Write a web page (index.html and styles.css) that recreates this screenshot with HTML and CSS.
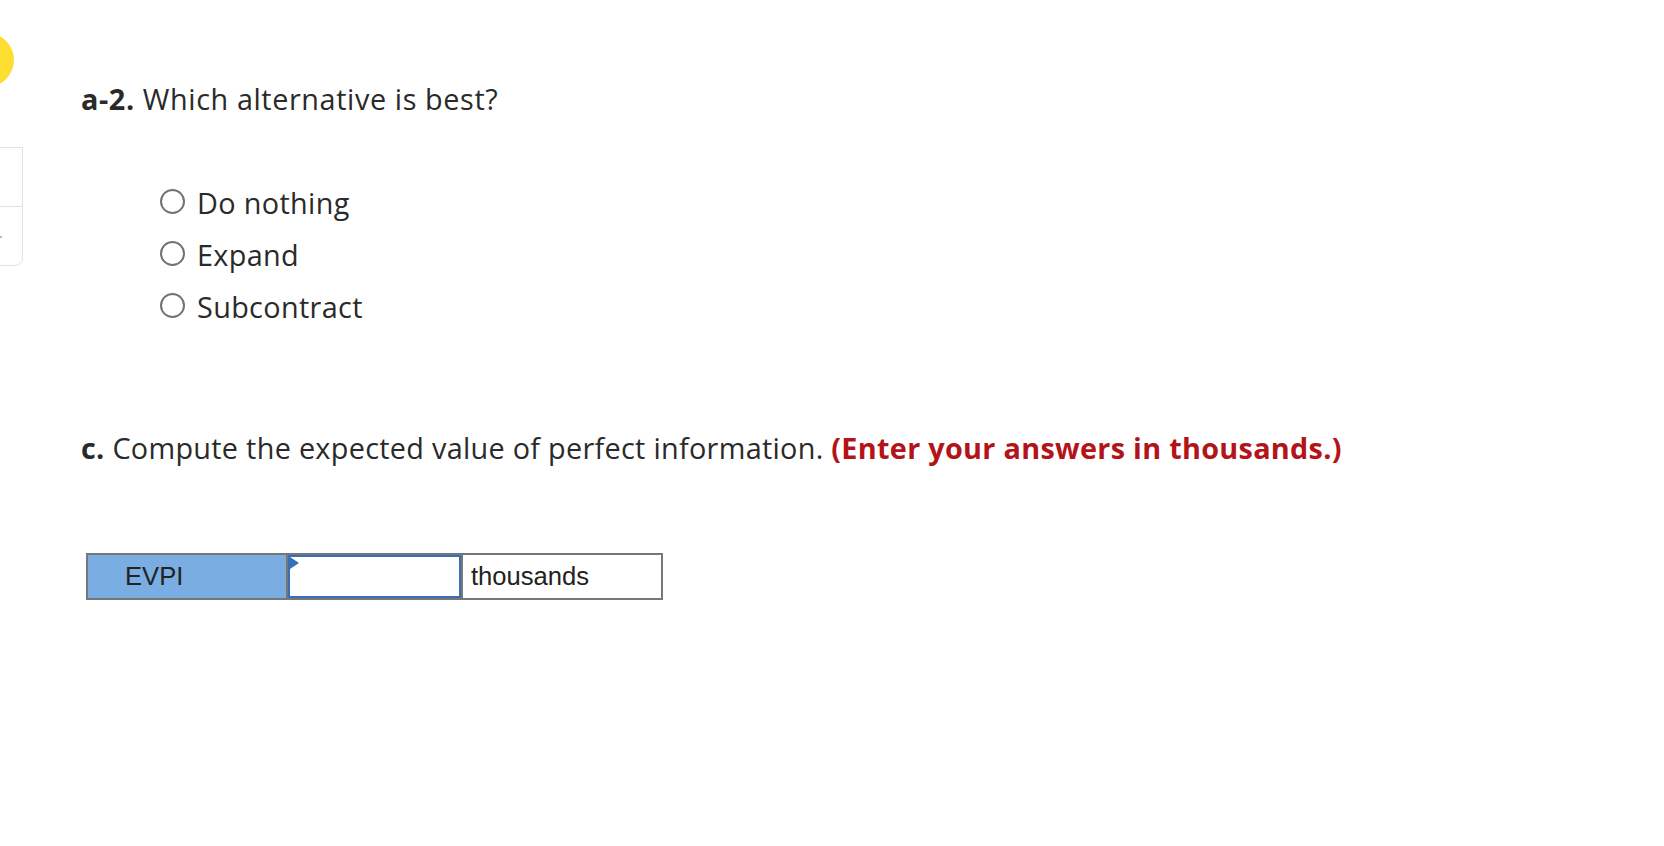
FILE: index.html
```html
<!DOCTYPE html>
<html lang="en">
<head>
<meta charset="utf-8">
<title>Expected value of perfect information</title>
<link rel="stylesheet" href="styles.css">
</head>
<body>
<div class="page">
  <aside class="rail">
    <span class="dot"></span>
    <div class="tools">
      <div class="tool"></div>
      <div class="tool"><span class="tick"></span></div>
    </div>
  </aside>
  <main class="content">
    <p class="q q-a"><b>a-2.</b> Which alternative is best?</p>
    <ul class="options">
      <li><span class="radio"></span>Do nothing</li>
      <li><span class="radio"></span>Expand</li>
      <li><span class="radio"></span>Subcontract</li>
    </ul>
    <p class="q q-c"><b>c.</b> Compute the expected value of perfect information. <strong class="note">(Enter your answers in thousands.)</strong></p>
    <div class="grid">
      <div class="cell cell-label">EVPI</div>
      <div class="cell cell-input"><div class="input"><span class="marker"></span></div></div>
      <div class="cell cell-unit">thousands</div>
    </div>
  </main>
</div>
</body>
</html>
```
FILE: styles.css
```css
html, body {
  margin: 0;
  padding: 0;
  background: #ffffff;
}
body {
  overflow: hidden;
  font-family: "Open Sans", "Liberation Sans", sans-serif;
  color: #2a2a2a;
}
.page {
  display: flex;
  align-items: flex-start;
  min-height: 846px;
}
.rail {
  flex: none;
  width: 23px;
  display: flex;
  flex-direction: column;
}
.dot {
  display: block;
  width: 54px;
  height: 54px;
  margin-top: 33px;
  margin-left: -40px;
  border-radius: 50%;
  background: #fede31;
}
.tools {
  margin-top: 60px;
  margin-left: -40px;
  width: 63px;
  border: 1.5px solid #e2e2e2;
  border-radius: 0 0 8px 0;
  box-sizing: border-box;
}
.tool {
  height: 58px;
  position: relative;
}
.tool + .tool {
  border-top: 1.5px solid #e2e2e2;
}
.tick {
  position: absolute;
  left: 38px;
  top: 29px;
  width: 3px;
  height: 2px;
  background: #9cc0ea;
}
.content {
  padding-left: 58px;
  padding-top: 81px;
}
.q {
  margin: 0;
  font-size: 28.8px;
  line-height: 36px;
  letter-spacing: 0.3px;
  white-space: nowrap;
}
.q-a {
  letter-spacing: 0.6px;
}
.q b {
  font-weight: 700;
}
.options {
  list-style: none;
  margin: 60px 0 0;
  padding: 0 0 0 79px;
}
.options li {
  display: flex;
  align-items: center;
  height: 52px;
  font-size: 28.8px;
  letter-spacing: 0.35px;
  line-height: 52px;
}
.radio {
  flex: none;
  width: 25px;
  height: 25px;
  box-sizing: border-box;
  border: 2px solid #737373;
  border-radius: 50%;
  margin-right: 12px;
  margin-bottom: 4px;
}
.q-c {
  margin-top: 97px;
}
.note {
  color: #b31419;
  font-weight: 700;
}
.grid {
  display: grid;
  grid-template-columns: 198px 173px 198px;
  gap: 2px;
  width: max-content;
  margin: 87px 0 0 5px;
  border: 2px solid #777777;
  background: #777777;
  font-family: "Liberation Sans", Arial, sans-serif;
  font-size: 25.6px;
  color: #222222;
}
.cell {
  height: 43px;
  display: flex;
  align-items: center;
  background: #ffffff;
}
.cell-label {
  background: #7aaee3;
  padding-left: 37px;
}
.cell-unit {
  padding-left: 8px;
}
.cell-input {
  align-items: stretch;
}
.input {
  position: relative;
  flex: 1;
  border: 2px solid #3a6fb4;
  background: #ffffff;
}
.marker {
  position: absolute;
  left: 0;
  top: 0;
  width: 0;
  height: 0;
  border-left: 9px solid #3a6fb4;
  border-top: 6px solid transparent;
  border-bottom: 6px solid transparent;
}
```
